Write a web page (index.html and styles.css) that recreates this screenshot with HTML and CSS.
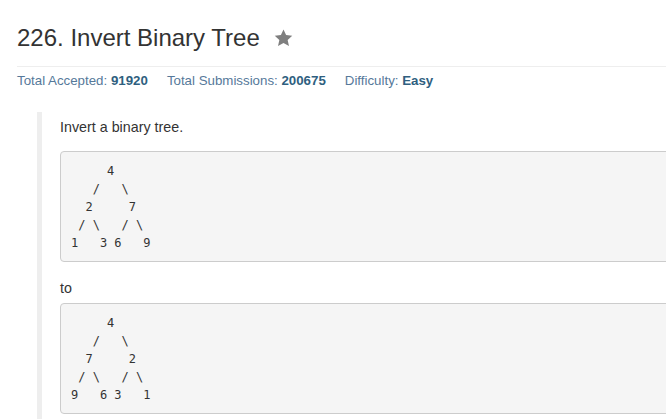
FILE: index.html
```
<!DOCTYPE html>
<html>
<head>
<meta charset="utf-8">
<link rel="stylesheet" href="styles.css">
</head>
<body>
<div class="page">
  <div class="header">
    <h3 class="title">226. Invert Binary Tree</h3>
    <svg class="star" width="19" height="18" viewBox="0 0 24 23"><path d="M12 0.5l3.3 7.3 7.9.8-5.9 5.4 1.7 7.8L12 17.8l-7 4 1.7-7.8L0.8 8.6l7.9-.8z" fill="#7f7f7f"/></svg>
  </div>
  <div class="stats">
    <span class="stat">Total Accepted: <b>91920</b></span>
    <span class="stat">Total Submissions: <b>200675</b></span>
    <span class="stat">Difficulty: <b>Easy</b></span>
  </div>
  <blockquote class="desc">
    <p class="lead">Invert a binary tree.</p>
<pre>     4
   /   \
  2     7
 / \   / \
1   3 6   9</pre>
    <p class="mid">to</p>
<pre>     4
   /   \
  7     2
 / \   / \
9   6 3   1</pre>
  </blockquote>
</div>
</body>
</html>
```
FILE: styles.css
```
html, body {
  margin: 0;
  padding: 0;
  background: #fff;
}
body {
  font-family: "Liberation Sans", Arial, sans-serif;
  font-size: 14px;
  line-height: 20px;
  color: #333;
}
.page {
  padding: 0 0 0 17px;
}
.header {
  display: flex;
  align-items: center;
  gap: 14px;
  padding-top: 22px;
  height: 32px;
}
.title {
  margin: 0;
  font-size: 24px;
  font-weight: normal;
  line-height: 32px;
  color: #333;
}
.star {
  display: block;
  margin-top: 0;
}
.stats {
  margin-top: 12px;
  border-top: 1px solid #eee;
  padding-top: 5px;
  font-size: 13.3px;
  line-height: 18px;
  color: #56799a;
  display: flex;
  gap: 19px;
}
.stats b {
  color: #2f5f80;
}
.desc {
  margin: 22px 0 0 20px;
  padding: 5px 0 10px 18px;
  border-left: 5px solid #eee;
}
.desc p {
  font-size: 14.3px;
  line-height: 20px;
}
.lead {
  margin: 0 0 14px;
}
.mid {
  margin: 0 0 5px;
}
pre {
  margin: 0 -10px 16px 0;
  padding: 9.5px 10px;
  font-family: "DejaVu Sans Mono", "Liberation Mono", monospace;
  font-size: 12px;
  line-height: 18px;
  color: #333;
  background: #f5f5f5;
  border: 1px solid #ccc;
  border-radius: 4px;
}
```
